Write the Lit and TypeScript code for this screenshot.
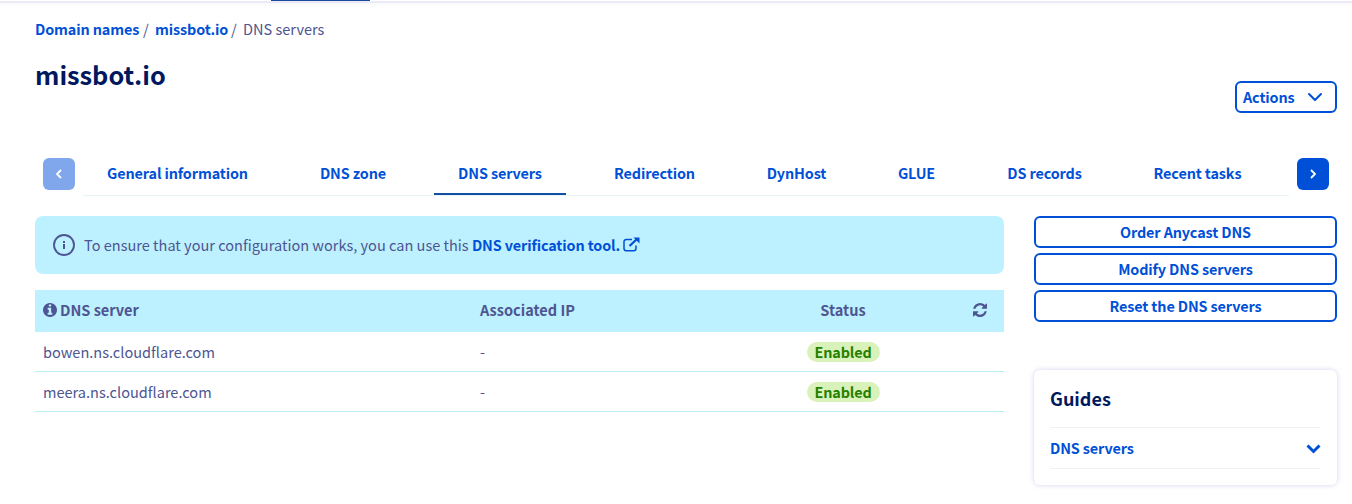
import { LitElement, html, css } from "lit";
import { customElement } from "lit/decorators.js";

interface Tab { label: string; width: number; active?: boolean }

const tabs: Tab[] = [
  { label: "General information", width: 189 },
  { label: "DNS zone", width: 114 },
  { label: "DNS servers", width: 132, active: true },
  { label: "Redirection", width: 129 },
  { label: "DynHost", width: 107 },
  { label: "GLUE", width: 85 },
  { label: "DS records", width: 123 },
  { label: "Recent tasks", width: 135 },
];

const servers = [
  { name: "bowen.ns.cloudflare.com", ip: "-", status: "Enabled" },
  { name: "meera.ns.cloudflare.com", ip: "-", status: "Enabled" },
];

const sideActions = ["Order Anycast DNS", "Modify DNS servers", "Reset the DNS servers"];

@customElement("app-root")
export class AppRoot extends LitElement {
  static styles = css`
    :host {
      display: block;
      height: 504px;
      overflow: hidden;
      box-sizing: border-box;
      background: #fff;
      color: #4d5592;
      font: 400 14.55px/24px "Noto Sans CJK SC", "Noto Sans", sans-serif;
    }
    * { box-sizing: border-box; }
    svg { display: block; flex: none; }
    a, button { color: #0050d7; font-weight: 700; text-decoration: none; font-size: 14.4px; letter-spacing: -0.12px; }
    button { font-family: inherit; line-height: 24px; padding: 0; cursor: pointer; }
    .topbar { height: 3px; background: linear-gradient(#fff 0 1px, #eaebf6 1px); box-shadow: 0 1px 4px #e9eaf580; padding-left: 271px; }
    .marker { width: 99px; height: 1px; background: #1b4a9e; }
    .page { padding: 14px 15px 0 35px; }
    .crumbs { display: flex; height: 24px; white-space: pre; }
    .crumbs .first { width: 108px; }
    .crumbs .sep { width: 12px; }
    .crumbs .second { width: 76px; }
    .head { display: flex; justify-content: space-between; height: 96px; }
    h1 { margin: 16px 0 0; font-size: 25.3px; line-height: 34px; color: #00185e; font-weight: 700; }
    .actions { margin-top: 40px; width: 102px; height: 32px; border: 2px solid #0050d7; border-radius: 6px; background: #fff; display: flex; align-items: center; justify-content: space-between; padding: 0 12px 0 6px; }
    .tabs { display: flex; height: 59px; margin-top: 16px; padding: 0 8px; align-items: flex-start; gap: 8px; }
    .nav { width: 32px; height: 32px; border: 0; border-radius: 6px; background: #0050d7; display: flex; align-items: center; justify-content: center; margin-top: 5px; }
    .nav.off { background: #80a7eb; }
    .list { display: flex; flex: 1; gap: 24px; height: 43px; border-bottom: 1px solid #e8f3f6; white-space: nowrap; }
    .tab { height: 42px; text-align: center; padding-top: 8px; }
    .tab.active { border-bottom: 2px solid #1250a5; }
    .body { display: grid; grid-template-columns: 969px 303px; column-gap: 30px; padding-top: 4px; }
    .banner { height: 58px; border-radius: 8px; background: #bef1ff; display: flex; align-items: center; padding: 0 18px; white-space: pre; }
    .banner .msg { margin-left: 9px; }
    .banner .ext { margin-left: 3px; margin-bottom: 2px; }
    .table { margin-top: 16px; }
    .row { display: grid; grid-template-columns: 437px 264px 198px 1fr; height: 40px; align-items: center; padding-left: 8px; border-bottom: 1px solid #bceef8; }
    .row.th { height: 42px; padding-bottom: 2px; background: #bef1ff; font-weight: 700; border: 0; }
    .name { display: flex; align-items: center; gap: 3px; }
    .status { display: flex; justify-content: center; }
    .badge { width: 73px; height: 20px; line-height: 20px; border-radius: 10px; background: #d9f2b9; color: #268000; font-weight: 700; font-size: 14.4px; letter-spacing: -0.12px; text-align: center; }
    .refresh { display: flex; padding-left: 31px; }
    .side { display: flex; flex-direction: column; gap: 5px; }
    .side button { height: 32px; border: 2px solid #0050d7; border-radius: 6px; background: #fff; }
    .guides { margin-top: 43px; height: 115px; border-radius: 6px; box-shadow: 0 0 5px #b8bbe4a0; padding: 15px 17px 0 16px; }
    h2 { margin: 0; height: 42px; font-size: 18px; line-height: 26px; color: #00185e; font-weight: 700; }
    .guide { display: flex; align-items: center; justify-content: space-between; height: 42px; border: solid #eff0f5; border-width: 1px 0; }
    .guide svg { margin-right: -1px; margin-top: 2px; }
  `;

  render() {
    return html`
      <div class="topbar"><div class="marker"></div></div>
      <main class="page">
        <nav class="crumbs"><a class="first">Domain names</a><span class="sep">/</span><a class="second">missbot.io</a><span class="sep">/</span><span>DNS servers</span></nav>
        <div class="head">
          <h1>missbot.io</h1>
          <button class="actions"><span>Actions</span>
            <svg width="16" height="10" viewBox="0 0 16 10" fill="none" stroke="#0050d7" stroke-width="2" stroke-linecap="round" stroke-linejoin="round"><path d="M2 2l6 6 6-6" /></svg>
          </button>
        </div>
        <div class="tabs">
          <button class="nav off"><svg width="8" height="12" viewBox="0 0 8 12" fill="none" stroke="#fff" stroke-width="1.8"><path d="M6 2L2 6l4 4" /></svg></button>
          <div class="list">
            ${tabs.map((t) => html`<a class="tab ${t.active ? "active" : ""}" style="width:${t.width}px">${t.label}</a>`)}
          </div>
          <button class="nav"><svg width="8" height="12" viewBox="0 0 8 12" fill="none" stroke="#fff" stroke-width="1.8"><path d="M2 2l4 4-4 4" /></svg></button>
        </div>
        <div class="body">
          <section>
            <div class="banner">
              <svg width="22" height="22" viewBox="0 0 22 22" fill="#4d5592"><circle cx="11" cy="11" r="10" fill="none" stroke="#4d5592" stroke-width="1.9" /><rect x="10" y="7" width="2" height="2" /><rect x="10" y="10" width="2" height="5" /></svg>
              <span class="msg">To ensure that your configuration works, you can use this <a>DNS verification tool.</a></span>
              <svg class="ext" width="17" height="15" viewBox="0 0 17 15" fill="none" stroke="#0050d7"><path d="M9 2.500H3.200A2.200 2.200 0 0 0 1 4.700v6.800a2.200 2.200 0 0 0 2.200 2.200h7.600a2.200 2.200 0 0 0 2.200-2.200V8.500" stroke-width="1.500" /><path d="M6.500 9L14 2" stroke-width="2.200" /><path d="M10.500 0.500h6v6z" fill="#0050d7" stroke="none" /></svg>
            </div>
            <div class="table">
              <div class="row th">
                <span class="name"><svg width="14" height="14" viewBox="128 128 1536 1536" fill="#4d5592"><path d="M1152 1376v-160q0-14-9-23t-23-9h-96v-512q0-14-9-23t-23-9h-320q-14 0-23 9t-9 23v160q0 14 9 23t23 9h96v320h-96q-14 0-23 9t-9 23v160q0 14 9 23t23 9h448q14 0 23-9t9-23zm-128-896v-160q0-14-9-23t-23-9h-192q-14 0-23 9t-9 23v160q0 14 9 23t23 9h192q14 0 23-9t9-23zm640 416q0 209-103 385.500t-279.500 279.500-385.500 103-385.500-103-279.500-279.500-103-385.500 103-385.500 279.500-279.500 385.500-103 385.500 103 279.500 279.500 103 385.500z" /></svg>DNS server</span>
                <span>Associated IP</span>
                <span class="status">Status</span>
                <span class="refresh"><svg width="14" height="14" viewBox="128 128 1536 1536" fill="#4d5592"><path d="M1639 1056q0 5-1 7-64 268-268 434.500t-478 166.500q-146 0-282.500-55t-243.500-157l-129 129q-19 19-45 19t-45-19-19-45v-448q0-26 19-45t45-19h448q26 0 45 19t19 45-19 45l-137 137q71 66 161 102t187 36q134 0 250-65t186-179q11-17 53-117 8-23 30-23h192q13 0 22.500 9.500t9.500 22.500zm25-800v448q0 26-19 45t-45 19h-448q-26 0-45-19t-19-45 19-45l138-138q-148-137-349-137-134 0-250 65t-186 179q-11 17-53 117-8 23-30 23h-199q-13 0-22.500-9.500t-9.500-22.500v-7q65-268 270-434.500t480-166.500q146 0 284 55.500t245 156.500l130-129q19-19 45-19t45 19 19 45z" /></svg></span>
              </div>
              ${servers.map((s) => html`<div class="row"><span>${s.name}</span><span>${s.ip}</span><span class="status"><span class="badge">${s.status}</span></span></div>`)}
            </div>
          </section>
          <aside class="side">
            ${sideActions.map((a) => html`<button>${a}</button>`)}
            <div class="guides">
              <h2>Guides</h2>
              <div class="guide"><a>DNS servers</a><svg width="15" height="10" viewBox="0 0 15 10" fill="none" stroke="#0050d7" stroke-width="3"><path d="M1.500 1.500l6 6 6-6" /></svg></div>
            </div>
          </aside>
        </div>
      </main>
    `;
  }
}
